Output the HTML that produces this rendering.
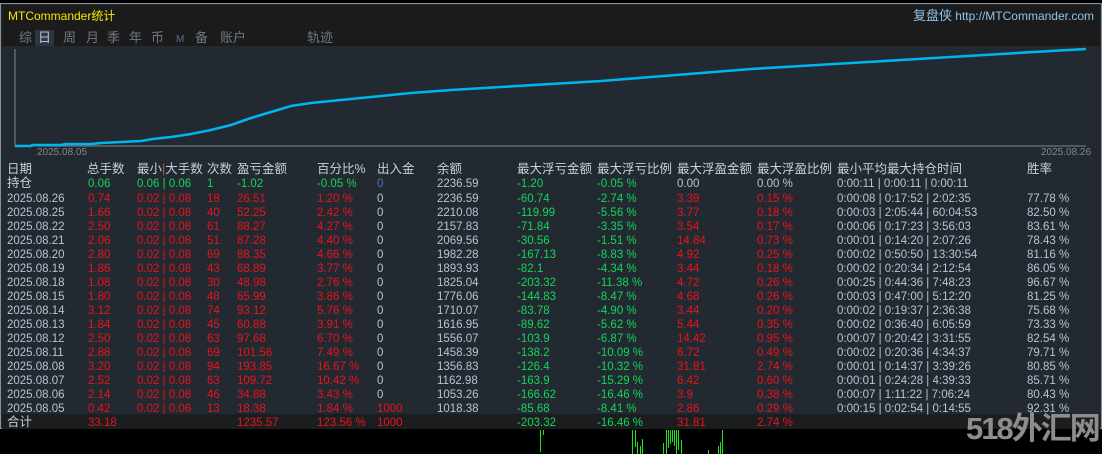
<!DOCTYPE html>
<html><head><meta charset="utf-8"><style>
*{margin:0;padding:0;box-sizing:border-box}
html{width:1102px;height:454px;overflow:hidden;background:#000}
body{width:1102px;height:454px;background:#000;position:relative;overflow:hidden;font-family:"Liberation Sans","Noto Sans CJK SC",sans-serif;font-size:11.5px;line-height:14px;color:#b9c3d3}
.panel{position:absolute;left:0;top:3px;width:1102px;height:426px;border:1px solid #8a9099;background:#232931}
.top{position:absolute;left:1px;top:1px;width:1098px;height:41px;background:#1b1b1b}
.title{position:absolute;left:6px;top:4px;color:#f5e800;font-size:12px}
.site{position:absolute;right:6px;top:4px;color:#8fc3ea;font-size:12px}
.site b{font-weight:normal;font-size:13px}
.tabs{position:absolute;top:26px;left:17px;font-size:13px;color:#6f7882}
.tabs span{position:absolute;top:0;white-space:nowrap}
.r{position:absolute;left:0;width:1100px;height:14px;white-space:nowrap}
.r span{position:absolute;top:0}
.h{font-size:12.5px;color:#c7cfdb}
.g{color:#12d65a}.d{color:#e8141c}.w{color:#b9c3d3}.b{color:#4a74c0}
.tot{position:absolute;left:1px;top:410px;width:1098px;height:15px;background:#1c1d1f}
.wm{position:absolute;left:966px;top:412px;font-size:31px;line-height:34px;font-weight:bold;color:#8d8d8d;letter-spacing:-2px;white-space:nowrap}
</style></head><body>
<div class="panel">
<div class="top">
<div class="title">MTCommander统计</div>
<div class="site"><b>复盘侠</b> http://MTCommander.com</div>
<div class="tabs">
<span style="left:0">综</span>
<span style="left:19px;top:-1px;background:#2e3440;color:#b9c3d3;padding:1px 3px;margin-left:-3px">日</span>
<span style="left:44px">周</span><span style="left:67px">月</span><span style="left:88px">季</span><span style="left:110px">年</span><span style="left:132px">币</span><span style="left:157px;font-size:10px;top:2px;color:#59708f">M</span><span style="left:176px">备</span><span style="left:201px">账户</span><span style="left:288px">轨迹</span>
</div>
</div>
<svg style="position:absolute;left:0;top:0" width="1100" height="160">
<polyline points="14,45 14,142 1085,142" fill="none" stroke="#7d858f" stroke-width="1"/>
<polyline fill="none" stroke="#00b4f0" stroke-width="2.6" points="14,142 30,142 31,141 60,141 65,140 90,140 100,139 120,138 140,137 152,135 170,133 190,130 210,126 230,121 250,114 270,108 290,102 310,99 330,97 350,95 380,92 410,89 450,86 500,83 550,80 600,77 650,73 700,69 750,65 800,62 850,59 900,56 950,53 1000,50 1050,47 1085,45"/>
<text x="36" y="151" fill="#7e8690" font-size="10" font-family="Liberation Sans">2025.08.05</text>
<text x="1040" y="151" fill="#7e8690" font-size="10" font-family="Liberation Sans">2025.08.26</text>
</svg>
<div class="tot"></div>
</div>
<div class="r h" style="top:162px"><span style="left:7px">日期</span><span style="left:87px">总手数</span><span style="left:137px">最小<span style="position:static;color:#8a6a3a">|</span>大手数</span><span style="left:207px">次数</span><span style="left:237px">盈亏金额</span><span style="left:317px">百分比%</span><span style="left:377px">出入金</span><span style="left:437px">余额</span><span style="left:517px">最大浮亏金额</span><span style="left:597px">最大浮亏比例</span><span style="left:677px">最大浮盈金额</span><span style="left:757px">最大浮盈比例</span><span style="left:837px">最小平均最大持仓时间</span><span style="left:1027px">胜率</span></div>
<div class="r" style="top:177px"><span class="h" style="left:7px;top:-1px">持仓</span><span class="g" style="left:88px">0.06</span><span class="g" style="left:137px">0.06 | 0.06</span><span class="g" style="left:207px">1</span><span class="g" style="left:237px">-1.02</span><span class="g" style="left:317px">-0.05 %</span><span class="b" style="left:377px">0</span><span style="left:437px">2236.59</span><span class="g" style="left:517px">-1.20</span><span class="g" style="left:597px">-0.05 %</span><span style="left:677px">0.00</span><span style="left:757px">0.00 %</span><span style="left:837px">0:00:11 | 0:00:11 | 0:00:11</span></div>
<div class="r" style="top:192px"><span style="left:7px">2025.08.26</span><span class="d" style="left:88px">0.74</span><span class="d" style="left:137px">0.02 | 0.08</span><span class="d" style="left:207px">18</span><span class="d" style="left:237px">26.51</span><span class="d" style="left:317px">1.20 %</span><span style="left:377px">0</span><span style="left:437px">2236.59</span><span class="g" style="left:517px">-60.74</span><span class="g" style="left:597px">-2.74 %</span><span class="d" style="left:677px">3.39</span><span class="d" style="left:757px">0.15 %</span><span style="left:837px">0:00:08 | 0:17:52 | 2:02:35</span><span style="left:1027px">77.78 %</span></div>
<div class="r" style="top:206px"><span style="left:7px">2025.08.25</span><span class="d" style="left:88px">1.66</span><span class="d" style="left:137px">0.02 | 0.08</span><span class="d" style="left:207px">40</span><span class="d" style="left:237px">52.25</span><span class="d" style="left:317px">2.42 %</span><span style="left:377px">0</span><span style="left:437px">2210.08</span><span class="g" style="left:517px">-119.99</span><span class="g" style="left:597px">-5.56 %</span><span class="d" style="left:677px">3.77</span><span class="d" style="left:757px">0.18 %</span><span style="left:837px">0:00:03 | 2:05:44 | 60:04:53</span><span style="left:1027px">82.50 %</span></div>
<div class="r" style="top:220px"><span style="left:7px">2025.08.22</span><span class="d" style="left:88px">2.50</span><span class="d" style="left:137px">0.02 | 0.08</span><span class="d" style="left:207px">61</span><span class="d" style="left:237px">88.27</span><span class="d" style="left:317px">4.27 %</span><span style="left:377px">0</span><span style="left:437px">2157.83</span><span class="g" style="left:517px">-71.84</span><span class="g" style="left:597px">-3.35 %</span><span class="d" style="left:677px">3.54</span><span class="d" style="left:757px">0.17 %</span><span style="left:837px">0:00:06 | 0:17:23 | 3:56:03</span><span style="left:1027px">83.61 %</span></div>
<div class="r" style="top:234px"><span style="left:7px">2025.08.21</span><span class="d" style="left:88px">2.06</span><span class="d" style="left:137px">0.02 | 0.08</span><span class="d" style="left:207px">51</span><span class="d" style="left:237px">87.28</span><span class="d" style="left:317px">4.40 %</span><span style="left:377px">0</span><span style="left:437px">2069.56</span><span class="g" style="left:517px">-30.56</span><span class="g" style="left:597px">-1.51 %</span><span class="d" style="left:677px">14.84</span><span class="d" style="left:757px">0.73 %</span><span style="left:837px">0:00:01 | 0:14:20 | 2:07:26</span><span style="left:1027px">78.43 %</span></div>
<div class="r" style="top:248px"><span style="left:7px">2025.08.20</span><span class="d" style="left:88px">2.80</span><span class="d" style="left:137px">0.02 | 0.08</span><span class="d" style="left:207px">69</span><span class="d" style="left:237px">88.35</span><span class="d" style="left:317px">4.66 %</span><span style="left:377px">0</span><span style="left:437px">1982.28</span><span class="g" style="left:517px">-167.13</span><span class="g" style="left:597px">-8.83 %</span><span class="d" style="left:677px">4.92</span><span class="d" style="left:757px">0.25 %</span><span style="left:837px">0:00:02 | 0:50:50 | 13:30:54</span><span style="left:1027px">81.16 %</span></div>
<div class="r" style="top:262px"><span style="left:7px">2025.08.19</span><span class="d" style="left:88px">1.86</span><span class="d" style="left:137px">0.02 | 0.08</span><span class="d" style="left:207px">43</span><span class="d" style="left:237px">68.89</span><span class="d" style="left:317px">3.77 %</span><span style="left:377px">0</span><span style="left:437px">1893.93</span><span class="g" style="left:517px">-82.1</span><span class="g" style="left:597px">-4.34 %</span><span class="d" style="left:677px">3.44</span><span class="d" style="left:757px">0.18 %</span><span style="left:837px">0:00:02 | 0:20:34 | 2:12:54</span><span style="left:1027px">86.05 %</span></div>
<div class="r" style="top:276px"><span style="left:7px">2025.08.18</span><span class="d" style="left:88px">1.08</span><span class="d" style="left:137px">0.02 | 0.08</span><span class="d" style="left:207px">30</span><span class="d" style="left:237px">48.98</span><span class="d" style="left:317px">2.76 %</span><span style="left:377px">0</span><span style="left:437px">1825.04</span><span class="g" style="left:517px">-203.32</span><span class="g" style="left:597px">-11.38 %</span><span class="d" style="left:677px">4.72</span><span class="d" style="left:757px">0.26 %</span><span style="left:837px">0:00:25 | 0:44:36 | 7:48:23</span><span style="left:1027px">96.67 %</span></div>
<div class="r" style="top:290px"><span style="left:7px">2025.08.15</span><span class="d" style="left:88px">1.80</span><span class="d" style="left:137px">0.02 | 0.08</span><span class="d" style="left:207px">48</span><span class="d" style="left:237px">65.99</span><span class="d" style="left:317px">3.86 %</span><span style="left:377px">0</span><span style="left:437px">1776.06</span><span class="g" style="left:517px">-144.83</span><span class="g" style="left:597px">-8.47 %</span><span class="d" style="left:677px">4.68</span><span class="d" style="left:757px">0.26 %</span><span style="left:837px">0:00:03 | 0:47:00 | 5:12:20</span><span style="left:1027px">81.25 %</span></div>
<div class="r" style="top:304px"><span style="left:7px">2025.08.14</span><span class="d" style="left:88px">3.12</span><span class="d" style="left:137px">0.02 | 0.08</span><span class="d" style="left:207px">74</span><span class="d" style="left:237px">93.12</span><span class="d" style="left:317px">5.76 %</span><span style="left:377px">0</span><span style="left:437px">1710.07</span><span class="g" style="left:517px">-83.78</span><span class="g" style="left:597px">-4.90 %</span><span class="d" style="left:677px">3.44</span><span class="d" style="left:757px">0.20 %</span><span style="left:837px">0:00:02 | 0:19:37 | 2:36:38</span><span style="left:1027px">75.68 %</span></div>
<div class="r" style="top:318px"><span style="left:7px">2025.08.13</span><span class="d" style="left:88px">1.84</span><span class="d" style="left:137px">0.02 | 0.08</span><span class="d" style="left:207px">45</span><span class="d" style="left:237px">60.88</span><span class="d" style="left:317px">3.91 %</span><span style="left:377px">0</span><span style="left:437px">1616.95</span><span class="g" style="left:517px">-89.62</span><span class="g" style="left:597px">-5.62 %</span><span class="d" style="left:677px">5.44</span><span class="d" style="left:757px">0.35 %</span><span style="left:837px">0:00:02 | 0:36:40 | 6:05:59</span><span style="left:1027px">73.33 %</span></div>
<div class="r" style="top:332px"><span style="left:7px">2025.08.12</span><span class="d" style="left:88px">2.50</span><span class="d" style="left:137px">0.02 | 0.08</span><span class="d" style="left:207px">63</span><span class="d" style="left:237px">97.68</span><span class="d" style="left:317px">6.70 %</span><span style="left:377px">0</span><span style="left:437px">1556.07</span><span class="g" style="left:517px">-103.9</span><span class="g" style="left:597px">-6.87 %</span><span class="d" style="left:677px">14.42</span><span class="d" style="left:757px">0.95 %</span><span style="left:837px">0:00:07 | 0:20:42 | 3:31:55</span><span style="left:1027px">82.54 %</span></div>
<div class="r" style="top:346px"><span style="left:7px">2025.08.11</span><span class="d" style="left:88px">2.88</span><span class="d" style="left:137px">0.02 | 0.08</span><span class="d" style="left:207px">69</span><span class="d" style="left:237px">101.56</span><span class="d" style="left:317px">7.49 %</span><span style="left:377px">0</span><span style="left:437px">1458.39</span><span class="g" style="left:517px">-138.2</span><span class="g" style="left:597px">-10.09 %</span><span class="d" style="left:677px">6.72</span><span class="d" style="left:757px">0.49 %</span><span style="left:837px">0:00:02 | 0:20:36 | 4:34:37</span><span style="left:1027px">79.71 %</span></div>
<div class="r" style="top:360px"><span style="left:7px">2025.08.08</span><span class="d" style="left:88px">3.20</span><span class="d" style="left:137px">0.02 | 0.08</span><span class="d" style="left:207px">94</span><span class="d" style="left:237px">193.85</span><span class="d" style="left:317px">16.67 %</span><span style="left:377px">0</span><span style="left:437px">1356.83</span><span class="g" style="left:517px">-126.4</span><span class="g" style="left:597px">-10.32 %</span><span class="d" style="left:677px">31.81</span><span class="d" style="left:757px">2.74 %</span><span style="left:837px">0:00:01 | 0:14:37 | 3:39:26</span><span style="left:1027px">80.85 %</span></div>
<div class="r" style="top:374px"><span style="left:7px">2025.08.07</span><span class="d" style="left:88px">2.52</span><span class="d" style="left:137px">0.02 | 0.08</span><span class="d" style="left:207px">63</span><span class="d" style="left:237px">109.72</span><span class="d" style="left:317px">10.42 %</span><span style="left:377px">0</span><span style="left:437px">1162.98</span><span class="g" style="left:517px">-163.9</span><span class="g" style="left:597px">-15.29 %</span><span class="d" style="left:677px">6.42</span><span class="d" style="left:757px">0.60 %</span><span style="left:837px">0:00:01 | 0:24:28 | 4:39:33</span><span style="left:1027px">85.71 %</span></div>
<div class="r" style="top:388px"><span style="left:7px">2025.08.06</span><span class="d" style="left:88px">2.14</span><span class="d" style="left:137px">0.02 | 0.08</span><span class="d" style="left:207px">46</span><span class="d" style="left:237px">34.88</span><span class="d" style="left:317px">3.43 %</span><span style="left:377px">0</span><span style="left:437px">1053.26</span><span class="g" style="left:517px">-166.62</span><span class="g" style="left:597px">-16.46 %</span><span class="d" style="left:677px">3.9</span><span class="d" style="left:757px">0.38 %</span><span style="left:837px">0:00:07 | 1:11:22 | 7:06:24</span><span style="left:1027px">80.43 %</span></div>
<div class="r" style="top:402px"><span style="left:7px">2025.08.05</span><span class="d" style="left:88px">0.42</span><span class="d" style="left:137px">0.02 | 0.06</span><span class="d" style="left:207px">13</span><span class="d" style="left:237px">18.38</span><span class="d" style="left:317px">1.84 %</span><span class="d" style="left:377px">1000</span><span style="left:437px">1018.38</span><span class="g" style="left:517px">-85.68</span><span class="g" style="left:597px">-8.41 %</span><span class="d" style="left:677px">2.86</span><span class="d" style="left:757px">0.29 %</span><span style="left:837px">0:00:15 | 0:02:54 | 0:14:55</span><span style="left:1027px">92.31 %</span></div>
<div class="r" style="top:416px"><span class="h" style="left:7px;top:-1px">合计</span><span class="d" style="left:88px">33.18</span><span class="d" style="left:237px">1235.57</span><span class="d" style="left:317px">123.56 %</span><span class="d" style="left:377px">1000</span><span class="g" style="left:517px">-203.32</span><span class="g" style="left:597px">-16.46 %</span><span class="d" style="left:677px">31.81</span><span class="d" style="left:757px">2.74 %</span></div>
<svg style="position:absolute;left:0;top:430px" width="1102" height="24">
<g stroke="#18e818" stroke-width="1">
<line x1="540.5" y1="0" x2="540.5" y2="22"/><line x1="543.5" y1="0" x2="543.5" y2="5"/>
<line x1="632.5" y1="0" x2="632.5" y2="24"/><line x1="635.5" y1="0" x2="635.5" y2="17"/><line x1="637.5" y1="12" x2="637.5" y2="24"/><line x1="640.5" y1="16" x2="640.5" y2="24"/><line x1="642.5" y1="9" x2="642.5" y2="24"/>
<line x1="663.5" y1="13" x2="663.5" y2="24"/><line x1="666.5" y1="0" x2="666.5" y2="24"/><line x1="668.5" y1="0" x2="668.5" y2="18"/><line x1="670.5" y1="0" x2="670.5" y2="14"/><line x1="672.5" y1="0" x2="672.5" y2="12"/><line x1="674.5" y1="0" x2="674.5" y2="16"/><line x1="676.5" y1="0" x2="676.5" y2="24"/><line x1="678.5" y1="0" x2="678.5" y2="20"/><line x1="681.5" y1="10" x2="681.5" y2="24"/>
<line x1="708.5" y1="20" x2="708.5" y2="24"/><line x1="718.5" y1="16" x2="718.5" y2="24"/><line x1="720.5" y1="12" x2="720.5" y2="24"/><line x1="722.5" y1="0" x2="722.5" y2="24"/>
</g></svg>
<div class="wm">518外汇网</div>
</body></html>
